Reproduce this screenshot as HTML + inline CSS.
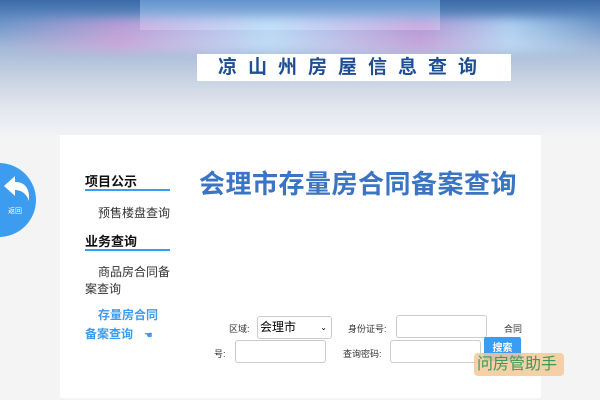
<!DOCTYPE html>
<html><head><meta charset="utf-8"><style>
*{margin:0;padding:0;box-sizing:border-box}
body{width:600px;height:400px;overflow:hidden;background:#f4f4f5;font-family:"Liberation Sans","Noto Sans CJK SC",sans-serif;position:relative}
.hdr{position:absolute;left:0;top:0;width:600px;height:135px;background:linear-gradient(180deg,#3a6aa8 0%,#6a94c8 16%,#a3b9d8 35%,#c3cfe0 55%,#e2e6ee 80%,#f1f2f5 100%)}
.streak{position:absolute;left:0;top:18px;width:600px;height:34px;background:linear-gradient(90deg,rgba(255,255,255,0) 0%,rgba(230,160,220,.6) 20%,rgba(200,230,255,.8) 45%,rgba(240,150,220,.5) 70%,rgba(200,230,255,.7) 85%,rgba(255,255,255,0) 100%);filter:blur(5px)}
.city{position:absolute;left:140px;top:0;width:300px;height:30px;background:linear-gradient(180deg,#6f9ed6,#b8d4f0);opacity:.8}
.title{position:absolute;left:197px;top:54px;width:314px;height:27px;background:#fff;color:#1f4f92;font-weight:bold;font-size:19px;letter-spacing:11px;line-height:27px;padding-left:21px;white-space:nowrap;overflow:hidden}
.card{position:absolute;left:60px;top:135px;width:481px;height:263px;background:#fff}
.back{position:absolute;left:-38px;top:163px;width:74px;height:74px;border-radius:50%;background:#3b9cf0}
.back span{position:absolute;left:46px;top:43px;color:#fff;font-size:7px}
.nav{position:absolute;left:85px;font-size:12px}
.h{font-weight:bold;font-size:13px;color:#111}
.line{position:absolute;left:85px;width:85px;height:2px;background:#3b9cf0}
.sub{color:#333;font-size:12px}
.big{position:absolute;left:199px;top:164px;color:#3b74c3;font-weight:bold;font-size:26px;letter-spacing:.5px;white-space:nowrap}
.lbl{position:absolute;font-size:9px;color:#333}
.inp{position:absolute;border:1px solid #ccc;border-radius:3px;background:#fff;height:23px}
</style></head><body>
<div class="hdr"><div class="city"></div><div class="streak"></div></div>
<div class="title">凉山州房屋信息查询</div>
<div class="card"></div>
<div class="back"><svg style="position:absolute;left:40px;top:12px" width="30" height="28" viewBox="0 0 30 28"><path d="M2 11 L13 1 L13 7 C22 7 28 12 27 26 C24 18 19 15 13 15 L13 21 Z" fill="#fff"/></svg><span>返回</span></div>
<div class="nav h" style="top:171px">项目公示</div>
<div class="line" style="top:189px"></div>
<div class="nav sub" style="top:204px;left:98px">预售楼盘查询</div>
<div class="nav h" style="top:231px">业务查询</div>
<div class="line" style="top:249px"></div>
<div class="nav sub" style="top:264px;width:86px;line-height:17px;text-indent:13px">商品房合同备案查询</div>
<div class="nav" style="top:306px;left:85px;line-height:19px;color:#3b9cf0;font-weight:bold"><span style="padding-left:13px">存量房合同</span><br>备案查询 <span style="font-size:9px;padding-left:8px">☚</span></div>
<div class="big">会理市存量房合同备案查询</div>
<div class="lbl" style="left:229px;top:322px">区域:</div>
<div class="inp" style="left:257px;top:316px;width:75px;font-size:12px;line-height:21px;padding-left:2px">会理市<span style="position:absolute;right:4px;font-size:8px">⌄</span></div>
<div class="lbl" style="left:348px;top:322px">身份证号:</div>
<div class="inp" style="left:396px;top:315px;width:91px"></div>
<div class="lbl" style="left:504px;top:322px">合同</div>
<div class="lbl" style="left:214px;top:347px">号:</div>
<div class="inp" style="left:235px;top:340px;width:91px"></div>
<div class="lbl" style="left:343px;top:347px">查询密码:</div>
<div class="inp" style="left:390px;top:340px;width:91px"></div>
<div style="position:absolute;left:484px;top:337px;width:37px;height:24px;background:#3b9cf0;border-radius:2px;color:#fff;font-size:10px;font-weight:bold;text-align:center;line-height:24px">搜索</div>
<div style="position:absolute;left:474px;top:353px;width:90px;height:23px;background:rgba(245,200,150,.85);border-radius:4px;color:#3a9a5a;font-size:16px;line-height:23px;padding-left:3px">问房管助手</div>
</body></html>
